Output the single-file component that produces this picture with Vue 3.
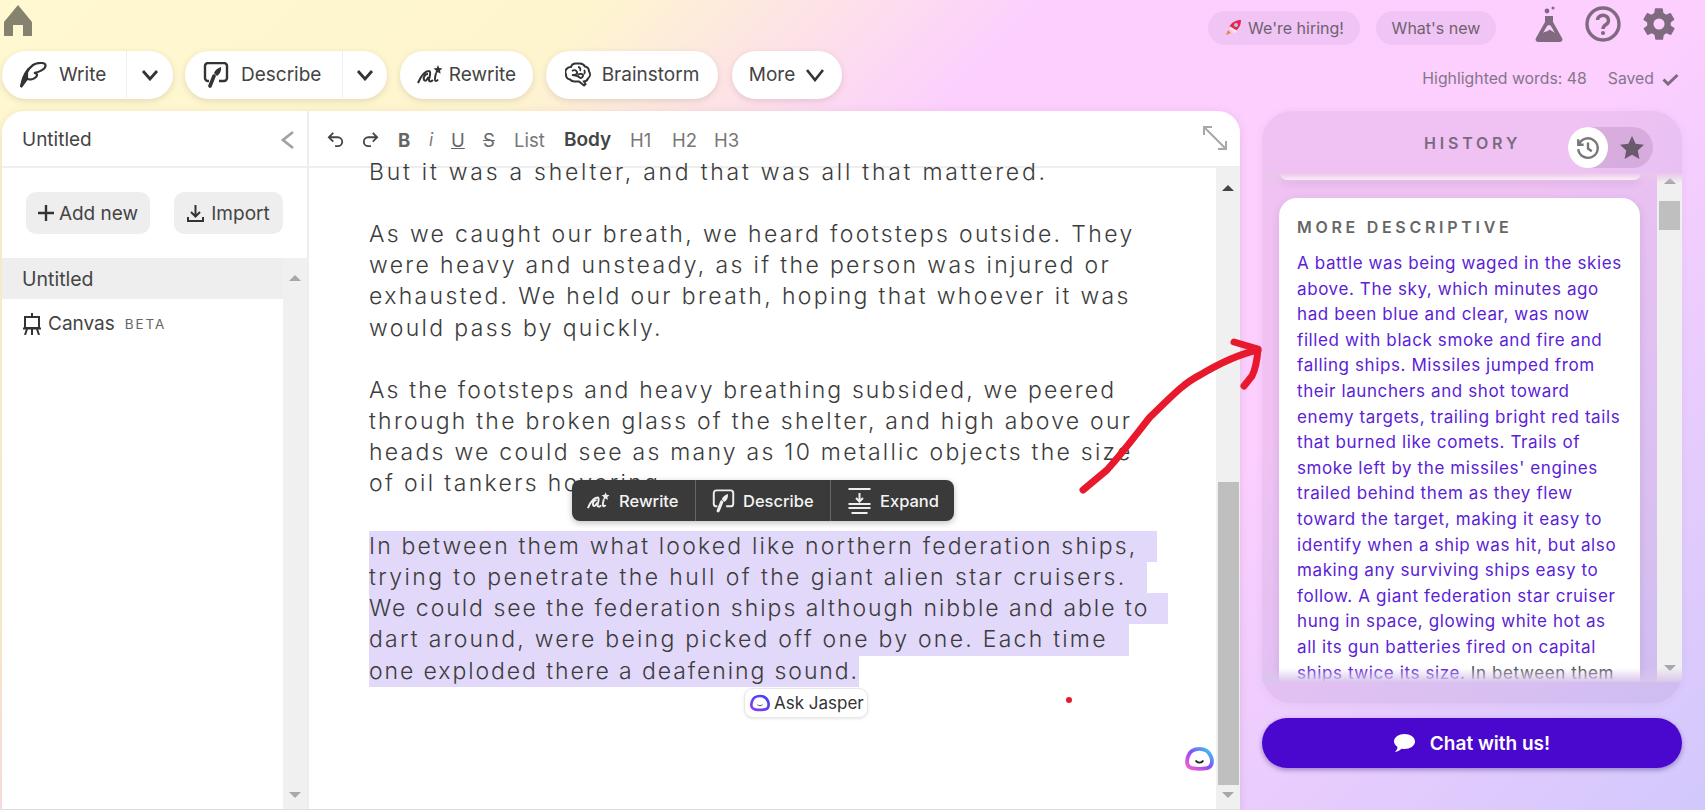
<template>
  <div class="app">
    <header class="topbar">
      <svg class="home" viewBox="0 0 30 31"><path d="M15 0 29 17V31H20V20H10V31H1V17Z" fill="#85826f" /></svg>
      <div class="top-right">
        <a class="chip chip-hire">
          <svg width="18" height="18" viewBox="0 0 18 18">
            <path d="M17 1C12 1 8 3 5 8l5 5c5-3 7-7 7-12Z" fill="#ef1f4f" />
            <path d="M6 7 7 8l5 3 1 2-3 1-5-5Z" fill="#fbe3ea" />
            <circle cx="12" cy="6" r="2" fill="#9fd5ea" />
            <path d="M2 16l2-5 3 3Z" fill="#f7803c" />
          </svg>
          We're hiring!
        </a>
        <a class="chip chip-new">What's new</a>
        <svg class="top-icon flask" viewBox="0 0 28 36">
          <circle cx="12" cy="5" r="2.4" fill="#7f6a80" /><circle cx="18" cy="2" r="1.5" fill="#7f6a80" />
          <path d="M10 10h8v6l9 16a2.5 2.5 0 0 1-2 4H3a2.500 2.500 0 0 1-2-4l9-16Z" fill="#7f6a80" />
          <path d="M14 19c-2 0-3 3-6 8 3-2 6-2 6-3s3 1 6 3c-3-5-4-8-6-8Z" fill="#fccfff" />
        </svg>
        <svg class="top-icon help" viewBox="0 0 36 36">
          <circle cx="18" cy="18" r="16" fill="none" stroke="#7f6a80" stroke-width="3.4" />
          <path d="M12.500 14a5.500 5 0 1 1 8.500 4.500c-2 1.300-3 2-3 4.500" fill="none" stroke="#7f6a80" stroke-width="3.400" />
          <circle cx="18" cy="27" r="2.100" fill="#7f6a80" />
        </svg>
        <svg class="top-icon gear" viewBox="0 0 24 24">
          <path fill="#7f6a80" d="M19.400 13a7.500 7.500 0 0 0 0-2l2.100-1.600a.5.500 0 0 0 .1-.6l-2-3.500a.5.500 0 0 0-.6-.2l-2.500 1a7.400 7.400 0 0 0-1.700-1l-.4-2.600a.5.500 0 0 0-.5-.5h-4a.5.500 0 0 0-.5.400l-.4 2.700a7.400 7.400 0 0 0-1.700 1l-2.500-1a.5.500 0 0 0-.6.200l-2 3.500a.5.500 0 0 0 .1.600L4.600 11a7.500 7.500 0 0 0 0 2l-2.100 1.600a.5.500 0 0 0-.1.600l2 3.500c.1.200.4.300.6.200l2.500-1c.5.400 1.100.7 1.700 1l.4 2.600c0 .3.200.5.500.5h4c.3 0 .5-.2.500-.4l.4-2.700c.6-.3 1.200-.6 1.700-1l2.500 1c.2.100.5 0 .6-.2l2-3.500a.5.500 0 0 0-.1-.6ZM12 15.500a3.500 3.500 0 1 1 0-7 3.500 3.500 0 0 1 0 7Z" />
        </svg>
      </div>
    </header>

    <div class="toolbar">
      <div class="tools">
        <div class="pill pill-write">
          <span class="pill-main">
            <svg width="27" height="26" viewBox="0 0 27 26" fill="none" stroke="#333" stroke-width="2.200">
              <path d="M1 25C3 17 6 8 13 3c4-2.500 12-3 12.500 0 .5 4-6 7-11.500 8 3 0 4 2 2 4-2 2-6 3-9 2" />
              <path d="M1 25c1-6 2-11 6-16v8Z" fill="#333" />
            </svg>
            Write
          </span>
          <span class="pill-caret"><svg width="18" height="12" viewBox="0 0 18 12" fill="none" stroke="#333" stroke-width="2.800"><path d="M2 2l7 8 7-8" /></svg></span>
        </div>
        <div class="pill pill-describe">
          <span class="pill-main">
            <svg width="26" height="26" viewBox="0 0 26 26" fill="none" stroke="#333" stroke-width="2.400">
              <path d="M6 19H5a3 3 0 0 1-3-3V4a3 3 0 0 1 3-3h16a3 3 0 0 1 3 3v12a3 3 0 0 1-3 3h-5" />
              <path d="M18 5c.5 4-1 7-4 9l-3-3c1-3 4-5 7-6Z" fill="#333" stroke="none" />
              <path d="M11 14 7 24" stroke-width="3.600" stroke-linecap="round" />
            </svg>
            Describe
          </span>
          <span class="pill-caret"><svg width="18" height="12" viewBox="0 0 18 12" fill="none" stroke="#333" stroke-width="2.800"><path d="M2 2l7 8 7-8" /></svg></span>
        </div>
        <div class="pill pill-rewrite">
          <svg width="26" height="20" viewBox="0 0 26 20" fill="none" stroke="#333" stroke-width="2">
            <path d="M1 18C4 11 8 6 12 6c2 0 1 5 0 8-.5 3 2 3 4 1M11 9c-3 0-5 3-4 6 1.500 2 3-.5 4.500-3M19 8c-.5 3-1.500 5-1 7 .5 1.500 2 1 3-.5" />
            <path d="M21 0l1.200 3 3.300.5-2.500 2 .6 3.300L21 7.200l-2.600 1.600.6-3.300-2.500-2 3.300-.5Z" fill="#333" stroke="none" />
          </svg>
          Rewrite
        </div>
        <div class="pill pill-brain">
          <svg width="26" height="25" viewBox="0 0 26 25" fill="none" stroke="#333" stroke-width="2">
            <path d="M6 5a5 5 0 0 1 5-3.500h3a6 6 0 0 1 6 3 5 5 0 0 1 4 5 5 5 0 0 1-1 7 5 5 0 0 1-4 3l1.500 2.500-1.500 1.500-5-4h-4a6 6 0 0 1-5-2 5 5 0 0 1-4-5 5 5 0 0 1 1-6 5 5 0 0 1 4-1.500Z" />
            <path d="M7 9c2-1.500 4-1 5 1s-2 3-4 3 4 0 6 2 3 1 4-1-3-3-5-1M13 5c2 0 3 2 2 4M19 8c1 1 1 3 0 4" stroke-width="1.800" />
          </svg>
          Brainstorm
        </div>
        <div class="pill pill-more">
          More
          <svg width="20" height="14" viewBox="0 0 20 14" fill="none" stroke="#333" stroke-width="2.600"><path d="M2 2l8 10 8-10" /></svg>
        </div>
      </div>
      <div class="status">
        <span>Highlighted words: 48</span>
        <span class="saved">Saved
          <svg width="17" height="13" viewBox="0 0 17 13" fill="none" stroke="#7f6a80" stroke-width="3"><path d="M1.500 6.500 6 11 15.500 2" /></svg>
        </span>
      </div>
    </div>

    <main class="main">
      <section class="doc">
        <aside class="side">
          <div class="side-head">
            <span>Untitled</span>
            <svg width="15" height="20" viewBox="0 0 15 20" fill="none" stroke="#a3a3a3" stroke-width="2.800"><path d="M13 2 3 10l10 8" /></svg>
          </div>
          <div class="side-actions">
            <button class="side-btn btn-add">
              <svg width="16" height="16" viewBox="0 0 16 16" stroke="#333" stroke-width="2.400"><path d="M8 0v16M0 8h16" /></svg>
              Add new
            </button>
            <button class="side-btn btn-import">
              <svg width="17" height="17" viewBox="0 0 17 17" fill="none" stroke="#333" stroke-width="2"><path d="M8.500 0v11M4 7l4.500 4.500L13 7M1 12v4h15v-4" /></svg>
              Import
            </button>
          </div>
          <div class="side-list">
            <div class="side-items">
              <div class="side-item active">Untitled</div>
              <div class="side-item">
                <svg width="18" height="22" viewBox="0 0 18 22" fill="none" stroke="#333" stroke-width="2">
                  <path d="M9 0v4M2 4h14v11H2ZM0 15.500h18M4 16l-2 6M14 16l2 6M9 16v6" />
                </svg>
                <span>Canvas</span><small>BETA</small>
              </div>
            </div>
            <div class="scrollbar">
              <i class="arrow up"></i>
              <i class="arrow down"></i>
            </div>
          </div>
        </aside>

        <div class="editor">
          <div class="editor-tools">
            <svg class="tool-icon" width="17" height="17" viewBox="0 0 19 17" fill="none" stroke="#444" stroke-width="2"><path d="M7 1 2 6l5 5M2 6h10a5 5 0 0 1 0 10H9" /></svg>
            <svg class="tool-icon" width="17" height="17" viewBox="0 0 19 17" fill="none" stroke="#444" stroke-width="2"><path d="m12 1 5 5-5 5M17 6H7a5 5 0 0 0 0 10h3" /></svg>
            <b class="t-b">B</b>
            <i class="t-i">i</i>
            <u class="t-u">U</u>
            <s class="t-s">S</s>
            <span class="t-list">List</span>
            <b class="t-body">Body</b>
            <span class="t-h">H1</span>
            <span class="t-h">H2</span>
            <span class="t-h">H3</span>
            <svg class="expand" width="24" height="24" viewBox="0 0 24 24" fill="none" stroke="#a8a8a8" stroke-width="2"><path d="M1 9V1h8M1 1l22 22M23 15v8h-8" /></svg>
          </div>
          <div class="editor-body">
            <div class="paper">
              <div
                v-for="(line, i) in lines"
                :key="i"
                class="line"
                :class="{ marked: line.w }"
                :style="{ letterSpacing: (line.ls || 2.35) + 'px', width: line.w ? line.w + 'px' : null }"
              >{{ line.t || '\u00a0' }}</div>
            </div>
            <div class="scrollbar wide">
              <i class="arrow up dark"></i>
              <i class="thumb"></i>
              <i class="arrow down"></i>
            </div>

            <div class="float-bar">
              <span class="float-item f-rewrite">
                <svg width="23" height="18" viewBox="0 0 26 20" fill="none" stroke="#eee" stroke-width="2.200">
                  <path d="M1 18C4 11 8 6 12 6c2 0 1 5 0 8-.5 3 2 3 4 1M11 9c-3 0-5 3-4 6 1.500 2 3-.5 4.500-3M19 8c-.5 3-1.500 5-1 7 .5 1.500 2 1 3-.5" />
                  <path d="M21 0l1.200 3 3.300.5-2.500 2 .6 3.300L21 7.200l-2.600 1.600.6-3.300-2.500-2 3.300-.5Z" fill="#eee" stroke="none" />
                </svg>
                Rewrite
              </span>
              <span class="float-item f-describe">
                <svg width="23" height="24" viewBox="0 0 26 26" fill="none" stroke="#eee" stroke-width="2.200">
                  <path d="M6 19H5a3 3 0 0 1-3-3V4a3 3 0 0 1 3-3h16a3 3 0 0 1 3 3v12a3 3 0 0 1-3 3h-5" />
                  <path d="M18 5c.5 4-1 7-4 9l-3-3c1-3 4-5 7-6Z" fill="#eee" stroke="none" />
                  <path d="M11 14 7 24" stroke-width="3.600" stroke-linecap="round" />
                </svg>
                Describe
              </span>
              <span class="float-item f-expand">
                <svg width="25" height="28" viewBox="0 0 24 28" fill="none" stroke="#eee" stroke-width="2">
                  <path d="M1 2h22M12 6v8M8.500 11l3.500 3.500 3.500-3.500M1 17h22M1 21h22M4 26h16" />
                </svg>
                Expand
              </span>
            </div>

            <div class="ask">
              <svg width="20" height="18" viewBox="0 0 30 25">
                <path d="M15 2c6 0 10 3 12 8s1 11-4 12-11 1-16 0S1 16 3 10 9 2 15 2Z" fill="none" stroke="url(#askGrad)" stroke-width="4" />
                <path d="M11 15c2 2 6 2 8 0" fill="none" stroke="#555" stroke-width="1.500" />
                <defs><linearGradient id="askGrad" x1="0" y1="1" x2="1" y2="0"><stop offset="0" stop-color="#8a3cf5" /><stop offset="1" stop-color="#3a42f5" /></linearGradient></defs>
              </svg>
              Ask Jasper
            </div>
            <svg class="jasper" width="29" height="24" viewBox="0 0 30 25">
              <path d="M15 2c6 0 10 3 12 8s1 11-4 12-11 1-16 0S1 16 3 10 9 2 15 2Z" fill="#fff" stroke="url(#logoGrad)" stroke-width="4" />
              <path d="M11 14c2 3 6 3 8 0" fill="none" stroke="#222" stroke-width="2" />
              <defs><linearGradient id="logoGrad" x1="0" y1="1" x2="1" y2="0"><stop offset="0" stop-color="#ff5fc8" /><stop offset=".5" stop-color="#8a4cf5" /><stop offset="1" stop-color="#2fd6f5" /></linearGradient></defs>
            </svg>
          </div>
        </div>
      </section>

      <section class="right">
        <div class="panel">
          <div class="panel-head">
            <span class="panel-title">HISTORY</span>
            <div class="toggle">
              <span class="toggle-on">
                <svg width="26" height="26" viewBox="0 0 24 24" fill="none" stroke="#777" stroke-width="2.200">
                  <path d="M3.500 9a9 9 0 1 1-.5 4M3 4v5h5M12 7v5.500l3.500 2.500" />
                </svg>
              </span>
              <span class="toggle-off">
                <svg width="24" height="23" viewBox="0 0 24 23"><path d="m12 0 3.600 7.700 8.400 1-6.200 5.800 1.600 8.500-7.400-4.200L4.600 23l1.600-8.500L0 8.700l8.400-1Z" fill="#6b5a6e" /></svg>
              </span>
            </div>
          </div>
          <div class="panel-body">
            <div class="history">
              <div class="h-stub"></div>
              <article class="h-card">
                <h3>MORE DESCRIPTIVE</h3>
                <p>
                  <span class="new">A battle was being waged in the skies above. The sky, which minutes ago had been blue and clear, was now filled with black smoke and fire and falling ships. Missiles jumped from their launchers and shot toward enemy targets, trailing bright red tails that burned like comets. Trails of smoke left by the missiles' engines trailed behind them as they flew toward the target, making it easy to identify when a ship was hit, but also making any surviving ships easy to follow. A giant federation star cruiser hung in space, glowing white hot as all its gun batteries fired on capital ships twice its size.</span>
                  In between them
                </p>
              </article>
            </div>
            <div class="scrollbar panel-bar">
              <i class="arrow up"></i>
              <i class="panel-thumb"></i>
              <i class="arrow down"></i>
            </div>
            <div class="fade-top"></div>
            <div class="fade-bottom"></div>
          </div>
        </div>
        <button class="chat">
          <svg width="21" height="18" viewBox="0 0 21 18"><path d="M10.500 0C16 0 21 3 21 7.500S16 15 10.500 15c-1 0-2 0-3-.3C6 16 4 17.500 1 18c1.500-1.500 2.300-3 2.500-5C1.500 11.500 0 9.700 0 7.500 0 3 5 0 10.500 0Z" fill="#fff" /></svg>
          Chat with us!
        </button>
      </section>
    </main>

    <svg class="scribble" width="1705" height="810" viewBox="0 0 1705 810" fill="none" stroke="#e8192c" stroke-width="7" stroke-linecap="round" stroke-linejoin="round">
      <path d="M1083 490 1107 470C1125 450 1138 432 1150 417 1168 400 1182 384 1200 375 1220 363 1240 354 1258 350" />
      <path d="M1234 342 1258 349C1257 362 1254 372 1252 376L1244 386" />
      <circle cx="1069" cy="700" r="3" fill="#e8192c" stroke="none" />
    </svg>
  </div>
</template>

<script setup>
// ls: letter spacing of a line, w: width of the selection behind it
const lines = [
  { t: "But it was a shelter, and that was all that mattered.", ls: 2.75 },
  { t: "" },
  { t: "As we caught our breath, we heard footsteps outside. They" },
  { t: "were heavy and unsteady, as if the person was injured or" },
  { t: "exhausted. We held our breath, hoping that whoever it was" },
  { t: "would pass by quickly." },
  { t: "" },
  { t: "As the footsteps and heavy breathing subsided, we peered", ls: 2.11 },
  { t: "through the broken glass of the shelter, and high above our", ls: 2.24 },
  { t: "heads we could see as many as 10 metallic objects the size", ls: 2.25 },
  { t: "of oil tankers hovering." },
  { t: "" },
  { t: "In between them what looked like northern federation ships,", w: 788, ls: 2.18 },
  { t: "trying to penetrate the hull of the giant alien star cruisers.", w: 778, ls: 2.4 },
  { t: "We could see the federation ships although nibble and able to", w: 799, ls: 1.98 },
  { t: "dart around, were being picked off one by one. Each time", w: 760, ls: 2.25 },
  { t: "one exploded there a deafening sound.", w: 490, ls: 1.91 },
];
</script>

<style>
html, body { margin: 0; }
</style>

<style scoped>
.app {
  position: relative;
  width: 1705px;
  height: 810px;
  overflow: hidden;
  font-family: Inter, "Liberation Sans", sans-serif;
  color: #444;
  background: linear-gradient(135deg, #fff8d0 0%, #fef5cf 24%, #fccfff 42%, #fccfff 68%, #d2c8fc 100%);
}

.topbar { height: 51px; display: flex; justify-content: space-between; align-items: flex-start; padding: 0 28px 0 3px; box-sizing: border-box; }
.home { width: 30px; height: 31px; margin-top: 5px; }
.top-right { display: flex; align-items: center; height: 46px; padding-top: 3px; box-sizing: border-box; }
.chip { height: 34px; border-radius: 17px; background: rgba(90, 50, 100, 0.07); display: flex; align-items: center; justify-content: center; font-size: 16px; color: #6e6270; margin-top: 6px; }
.chip-hire { width: 152px; gap: 6px; margin-right: 16px; }
.chip-new { width: 120px; margin-right: 39px; }
.top-icon { display: block; margin-top: -2px; }
.flask { width: 28px; height: 36px; margin-right: 22px; }
.help { width: 36px; height: 36px; margin-right: 19px; }
.gear { width: 38px; height: 38px; margin-right: -1px; }

.toolbar { height: 48px; display: flex; justify-content: space-between; padding-left: 2px; padding-right: 26px; }
.tools { display: flex; }
.pill { height: 48px; padding-bottom: 1px; border-radius: 24px; background: #fff; box-shadow: 0 2px 6px rgba(90, 70, 60, 0.16); display: flex; align-items: center; justify-content: center; font-size: 19px; color: #444; box-sizing: border-box; flex: none; }
.pill-main { display: flex; align-items: center; gap: 12px; height: 100%; box-sizing: border-box; padding-left: 18px; }
.pill-caret { display: flex; align-items: center; justify-content: center; height: 100%; border-left: 1px solid #eee; box-sizing: border-box; }
.pill-write { width: 171px; margin-right: 12px; justify-content: flex-start; }
.pill-write .pill-main { width: 124px; }
.pill-write .pill-caret { width: 47px; }
.pill-describe { width: 202px; margin-right: 13px; justify-content: flex-start; }
.pill-describe .pill-main { width: 157px; }
.pill-describe .pill-caret { width: 45px; }
.pill-rewrite { width: 133px; margin-right: 13px; gap: 6px; }
.pill-brain { width: 172px; margin-right: 14px; gap: 11px; }
.pill-more { width: 110px; gap: 10px; }
.status { display: flex; gap: 21px; padding-top: 18px; font-size: 15.800px; color: #84768a; line-height: 20px; }
.saved { display: inline-flex; align-items: center; gap: 8px; height: 20px; }

.main { display: flex; margin: 12px 0 0 2px; height: 698px; }
.doc { width: 1238px; flex: none; background: #fff; border-radius: 22px 22px 0 0; border-bottom: 1px solid #ddd; height: 698px; display: flex; box-shadow: 0 2px 10px rgba(120, 70, 70, 0.15); overflow: hidden; }

.side { width: 305px; flex: none; border-right: 2px solid #eee; display: flex; flex-direction: column; }
.side-head { height: 53px; padding: 2px 12px 0 20px; border-bottom: 2px solid #eee; display: flex; align-items: center; justify-content: space-between; font-size: 19px; flex: none; }
.side-actions { display: flex; gap: 24px; padding: 24px 0 24px 24px; flex: none; }
.side-btn { height: 42px; border: 0; border-radius: 10px; background: #eee; font: inherit; font-size: 19px; color: #444; display: flex; align-items: center; justify-content: center; gap: 5px; padding: 0; }
.btn-add { width: 124px; }
.btn-import { width: 109px; gap: 7px; }
.side-list { flex: 1; display: flex; min-height: 0; }
.side-items { flex: 1; }
.side-item { height: 41px; display: flex; align-items: center; padding-left: 20px; font-size: 19px; color: #444; margin-bottom: 4px; }
.side-item.active { background: #eee; font-size: 19.500px; }
.side-item svg { margin: 0 7px 0 1px; }
.side-item small { font-size: 13.500px; letter-spacing: 1.900px; color: #666; margin-left: 10px; margin-top: 1px; }

.scrollbar { width: 24px; flex: none; background: #f0f0f0; position: relative; display: flex; flex-direction: column; justify-content: space-between; align-items: center; padding: 17px 0 11px; box-sizing: border-box; }
.arrow { display: block; width: 0; height: 0; border-left: 6px solid transparent; border-right: 6px solid transparent; }
.arrow.up { border-bottom: 6px solid #a8a8a8; }
.arrow.up.dark { border-bottom-color: #444; }
.arrow.down { border-top: 6px solid #a8a8a8; }

.editor { flex: 1; display: flex; flex-direction: column; min-width: 0; }
.editor-tools { height: 53px; padding: 2px 0 0 18px; border-bottom: 2px solid #eee; display: flex; align-items: center; font-size: 18.500px; color: #666; flex: none; position: relative; }
.tool-icon { margin-right: 18px; }
.t-b { font-weight: 700; margin-left: 1px; width: 31px; color: #666; }
.t-i { width: 22px; font-size: 17px; color: #777; }
.t-u { width: 32px; }
.t-s { width: 31px; }
.t-list { width: 50px; color: #777; }
.t-body { width: 66px; font-weight: 600; color: #444; font-size: 19px; }
.t-h { width: 42px; color: #777; }
.expand { position: absolute; right: 13px; top: 15px; }

.editor-body { flex: 1; display: flex; position: relative; min-height: 0; }
.paper { flex: 1; overflow: hidden; padding: 0 0 0 60px; margin-top: -11.400px; font-size: 23px; font-weight: 300; color: #3c3c3c; }
.line { line-height: 31.200px; height: 31.200px; white-space: nowrap; }
.marked { background: #e2d8fa; }
.scrollbar.wide { height: 100%; }
.thumb { position: absolute; left: 2px; right: 1px; bottom: 24px; height: 303px; background: #bfbfbf; }

.float-bar { position: absolute; left: 263px; top: 312px; height: 41px; border-radius: 8px; background: #3a3a3a; display: flex; box-shadow: 0 2px 6px rgba(0, 0, 0, 0.25); color: #f4f4f4; font-size: 16.500px; font-weight: 500; }
.float-item { display: flex; align-items: center; gap: 8px; height: 100%; box-sizing: border-box; }
.f-rewrite { width: 123px; padding-left: 15px; gap: 9px; }
.f-describe { width: 135px; padding-left: 16px; border-left: 1px solid #666; }
.f-expand { width: 124px; padding-left: 16px; border-left: 1px solid #666; }

.ask { position: absolute; left: 435px; top: 520px; height: 30px; width: 124px; box-sizing: border-box; border: 1px solid #e8e8e8; border-radius: 9px; background: #fff; display: flex; align-items: center; gap: 4px; padding-left: 5px; font-size: 17px; color: #333; box-shadow: 0 1px 3px rgba(0, 0, 0, 0.1); }
.jasper { position: absolute; left: 876px; top: 579px; }

.right { width: 420px; margin-left: 22px; flex: none; }
.panel { height: 592px; border-radius: 30px; background: rgba(90, 50, 100, 0.08); box-shadow: 0 1px 8px rgba(90, 50, 100, 0.06); display: flex; flex-direction: column; padding-bottom: 21px; box-sizing: border-box; }
.panel-head { height: 62px; flex: none; position: relative; }
.panel-title { position: absolute; left: 162px; top: 22px; font-size: 16px; font-weight: 600; letter-spacing: 3.800px; color: #7a6a80; line-height: 20px; }
.toggle { position: absolute; left: 306px; top: 16px; width: 85px; height: 41px; border-radius: 21px; background: rgba(90, 50, 100, 0.14); display: flex; align-items: center; }
.toggle-on { width: 41px; height: 41px; border-radius: 50%; background: #fff; display: flex; align-items: center; justify-content: center; }
.toggle-off { width: 44px; display: flex; justify-content: center; padding-left: 2px; }

.panel-body { flex: 1; display: flex; position: relative; min-height: 0; }
.history { width: 395px; flex: none; overflow: hidden; }
.h-stub { height: 7px; width: 361px; margin-left: 18px; background: #fff; border-radius: 0 0 14px 14px; box-shadow: 0 3px 8px rgba(90, 50, 100, 0.12); }
.h-card { width: 361px; height: 600px; box-sizing: border-box; margin: 18px 0 0 17px; padding: 17px 15px 0 18px; background: #fff; border-radius: 18px; box-shadow: 0 3px 10px rgba(90, 50, 100, 0.14); }
.h-card h3 { margin: 0; font-size: 16px; line-height: 24px; font-weight: 600; letter-spacing: 3.700px; color: #666; }
.h-card p { margin: 12px 0 0; font-size: 17px; letter-spacing: 0.6px; line-height: 25.600px; color: #555; }
.new { color: #5a22d8; }
.panel-bar { width: 25px; margin-left: 0; padding-top: 5px; }
.panel-thumb { position: absolute; left: 2px; right: 2px; top: 28px; height: 29px; background: #bfbfbf; }
.fade-top { position: absolute; left: 0; right: 0; top: 0; height: 10px; background: linear-gradient(#ebc6ea, rgba(235, 198, 234, 0)); }
.fade-bottom { position: absolute; left: 0; right: 0; bottom: 0; height: 14px; background: linear-gradient(rgba(215, 196, 238, 0), #d9c6ec); }

.chat { width: 100%; height: 50px; margin-top: 15px; border: 0; border-radius: 25px; background: #4a08cf; color: #fff; font: inherit; font-size: 19px; font-weight: 600; display: flex; align-items: center; justify-content: center; gap: 15px; box-shadow: 0 2px 5px rgba(50, 20, 120, 0.4); }

.scribble { position: absolute; left: 0; top: 0; pointer-events: none; }
</style>
